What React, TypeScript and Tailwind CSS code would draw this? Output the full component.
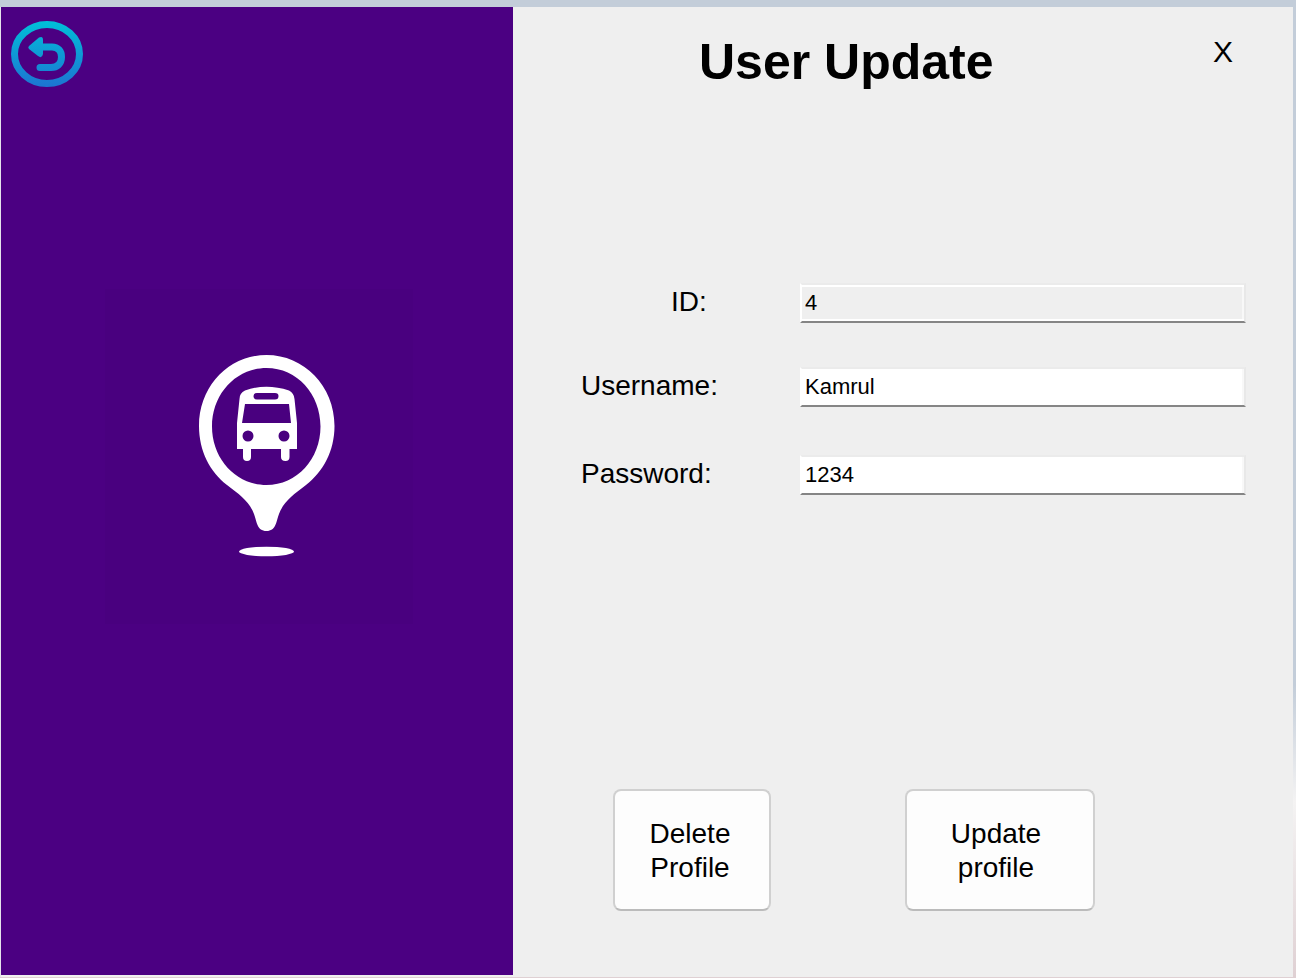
import { useState } from "react";

function BackIcon() {
  return (
    <svg viewBox="0 0 72 66" className="h-[66px] w-[72px]" aria-hidden="true">
      <defs>
        <linearGradient id="back" gradientUnits="userSpaceOnUse" x1="0" y1="0" x2="0" y2="66">
          <stop offset="0" stopColor="#00c0d8" />
          <stop offset="1" stopColor="#1d74d2" />
        </linearGradient>
      </defs>
      <ellipse cx="36" cy="33" rx="32.5" ry="29.5" fill="none" stroke="url(#back)" strokeWidth="7" />
      <path d="M28 26H41C47 26 50.500 30 50.500 36C50.500 43 46 46.500 40 46.500H29" fill="none" stroke="url(#back)" strokeWidth="7" strokeLinecap="round" />
      <path d="M18 25L28 16.500Q32 14.500 32 19V33Q31 38 27 35L18 28Q16.500 26.500 18 25Z" fill="url(#back)" />
    </svg>
  );
}

function BusPin() {
  return (
    <svg viewBox="105 289 308 335" className="h-[335px] w-[308px]" role="img" aria-label="Bus stop">
      <rect x="105" y="289" width="308" height="335" fill="#49007f" />
      <path
        fill="#fff"
        fillRule="evenodd"
        d="M266.500 355C304 355 334.500 386 334.500 426C334.500 451 323 472 306 485C293 495 284 501 279 514C276 522 276 531 266.500 531C257 531 257 522 254 514C249 501 240 495 227 485C210 472 199 451 199 426C199 386 229 355 266.500 355ZM266.500 368C236 368 212 394 212 426.500C212 459 236 485 266.500 485C297 485 320.500 459 320.500 426.500C320.500 394 297 368 266.500 368Z"
      />
      <path
        fill="#fff"
        fillRule="evenodd"
        d="M239.500 399Q239.500 393 245 390.500Q266 383 289 390.500Q294 393 294.500 399L297 423V449H289.500V457Q289.500 461 285.500 461Q281 461 281 457V449H251V457Q251 461 247 461Q243 461 243 457V449H237V423ZM257 393Q253.500 393 253.500 396Q253.500 399.500 257 399.500H275Q278.500 399.500 278.500 396Q278.500 393 275 393ZM245 404L242 423H291L289 404ZM248 430.500A5.500 5.500 0 1 0 248 441.500A5.500 5.500 0 1 0 248 430.500ZM284 430.500A5.500 5.500 0 1 0 284 441.500A5.500 5.500 0 1 0 284 430.500Z"
      />
      <ellipse cx="266.500" cy="551.500" rx="27.500" ry="4.800" fill="#fff" />
    </svg>
  );
}

const fieldClass =
  "h-10 w-full min-w-0 border-2 border-t-[#ebebeb] border-r-[#e8e8e8] border-b-[#858585] px-[3px] text-[22px] outline-none";

const buttonClass =
  "h-[122px] rounded-lg border-2 border-[#d0d0d0] border-b-[#bbbbbb] bg-[#fdfdfd] pt-0.5 text-[28px] leading-[34px]";

export default function App() {
  const [username, setUsername] = useState("Kamrul");
  const [password, setPassword] = useState("1234");

  return (
    <div className="flex min-h-screen bg-linear-to-b from-[#c3cdd9] from-70% via-[#f4f3f3] via-82% to-[#dfd0d3] pt-[7px] pr-[3px] pb-px font-['Liberation_Sans',Arial,sans-serif] text-black">
      <div className="grid flex-1 grid-cols-[512fr_780fr] border-l border-[#e4e4ec] bg-[#efefef]">
        <aside className="mb-[2px] flex flex-col bg-[#4b0082]">
          <button type="button" aria-label="Back" className="mt-[14px] ml-[10px] self-start">
            <BackIcon />
          </button>
          <div className="mt-[202px] flex justify-center pl-1">
            <BusPin />
          </div>
        </aside>

        <main className="flex flex-col">
          <header className="flex items-start justify-between pt-[25px] pr-[60px] pl-[186px]">
            <h1 className="text-[50px] leading-[60px] font-bold whitespace-nowrap">User Update</h1>
            <button type="button" aria-label="Close" className="mt-1 text-[30px] leading-8">
              X
            </button>
          </header>

          <form className="mt-[191px] pr-[47px] pl-[68px] text-[28px]" onSubmit={(e) => e.preventDefault()}>
            <div className="flex items-center">
              <label htmlFor="id" className="w-[219px] shrink-0 pb-0.5 pl-[90px] leading-9">
                ID:
              </label>
              <input
                id="id"
                readOnly
                value="4"
                className={`${fieldClass} border-l-white bg-[#efefef] shadow-[inset_0_2px_#fff,inset_0_-2px_#fff,inset_-2px_0_#f8f8f8]`}
              />
            </div>
            <div className="mt-11 flex items-center">
              <label htmlFor="username" className="w-[219px] shrink-0 pb-0.5 leading-9">
                Username:
              </label>
              <input
                id="username"
                value={username}
                onChange={(e) => setUsername(e.target.value)}
                className={`${fieldClass} border-l-white bg-white shadow-[inset_-2px_0_#f8f8f8]`}
              />
            </div>
            <div className="mt-12 flex items-center">
              <label htmlFor="password" className="w-[219px] shrink-0 pb-0.5 leading-9">
                Password:
              </label>
              <input
                id="password"
                value={password}
                onChange={(e) => setPassword(e.target.value)}
                className={`${fieldClass} border-l-white bg-white shadow-[inset_-2px_0_#f8f8f8]`}
              />
            </div>

            <div className="mt-[294px] flex gap-[134px] pl-8">
              <button type="button" className={`${buttonClass} w-[158px] pr-7 pl-6`}>
                Delete Profile
              </button>
              <button type="submit" className={`${buttonClass} w-[190px] pr-12 pl-10`}>
                Update profile
              </button>
            </div>
          </form>
        </main>
      </div>
    </div>
  );
}
